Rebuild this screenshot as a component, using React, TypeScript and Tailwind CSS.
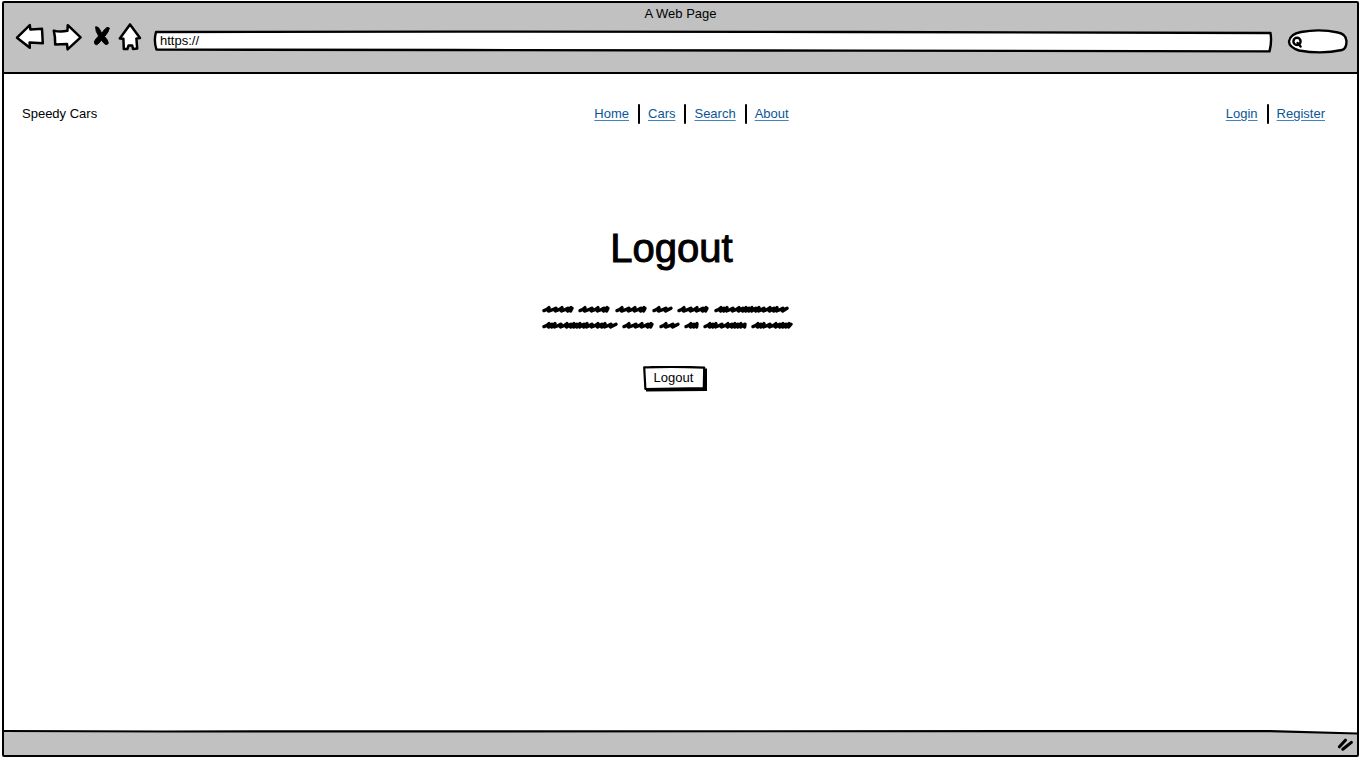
import type { ReactNode } from "react";

const mainLinks = ["Home", "Cars", "Search", "About"];
const accountLinks = ["Login", "Register"];

const scribbleLines = [
  { y: 5, words: [[0, 32], [36, 68], [73, 105], [110, 131], [135, 167], [172, 247]] },
  { y: 21, words: [[0, 76], [80, 112], [117, 138], [142, 157], [161, 205], [209, 251]] },
];

const shortPace = [7, 6, 6, 3, 3, 3, 3];
const longPace = [3, 3, 6, 6, 4, 3, 3, 3, 4, 3, 5, 6, 4, 3, 6, 6, 5, 6];

function scribble(start: number, end: number, y: number) {
  const pace = end - start > 35 || end - start < 20 ? longPace : shortPace;
  let x = start + 2;
  let i = 0;
  let d = `M${x} ${y + 1.6}`;
  while (x < end - 6) {
    const lift = i % 2 === 0 ? 1.4 : 0.8;
    d += `Q${x + 3} ${y + 0.6} ${x + 5} ${y - lift}Q${x + 3.4} ${y + 1.4} ${x + 4.6} ${y + 2}`;
    x += pace[i % pace.length];
    i += 1;
  }
  return `${d}L${end - 2} ${y - 0.8}`;
}

function Scribbles() {
  return (
    <svg className="h-7 w-[264px]" viewBox="0 0 264 28" fill="none" stroke="black" strokeWidth="3.4" strokeLinecap="round" strokeLinejoin="round" aria-hidden="true">
      {scribbleLines.map((line) =>
        line.words.map(([a, b]) => <path key={`${line.y}-${a}`} d={scribble(a, b, line.y)} />)
      )}
    </svg>
  );
}

function ToolButton({ label, children }: { label: string; children: ReactNode }) {
  return (
    <button type="button" aria-label={label} className="shrink-0">
      {children}
    </button>
  );
}

function LinkGroup({ label, items }: { label: string; items: string[] }) {
  return (
    <nav aria-label={label}>
      <ul className="flex h-5 items-center gap-[9px]">
        {items.map((item, i) => (
          <li key={item} className="flex items-center gap-2">
            {i > 0 && <span className="h-5 w-[2px] rounded-full bg-black" />}
            <a href="#" className="text-[#0b5596] underline decoration-[#3f86c0] underline-offset-2">
              {item}
            </a>
          </li>
        ))}
      </ul>
    </nav>
  );
}

function BrowserBar() {
  return (
    <header className="border-b-2 border-black bg-[#c1c1c1] pb-5">
      <p className="h-[21px] text-center leading-[21px]">A Web Page</p>
      <div className="flex items-end gap-1 pr-[9px] pl-3">
        <ToolButton label="Back">
          <svg className="h-7 w-8 overflow-visible" viewBox="16 24 32 28" fill="white" stroke="black" strokeWidth="2.5" strokeLinejoin="round">
            <path d="M17 37.7L29.8 25.2L30.4 29.6L42 28.8L42.8 43.2L29.6 42.6L29.8 47.8Z" />
          </svg>
        </ToolButton>
        <ToolButton label="Forward">
          <svg className="h-7 w-8 overflow-visible" viewBox="52 24 32 28" fill="white" stroke="black" strokeWidth="2.5" strokeLinejoin="round">
            <path d="M53.8 30.6Q60 32.4 67.4 30.8L67.8 25.2L80.6 37.4L67.6 49.4L67 44L55.2 44.4Q55.4 37 53.8 30.6Z" />
          </svg>
        </ToolButton>
        <ToolButton label="Stop">
          <svg className="h-7 w-6" viewBox="88 24 24 28" fill="black" stroke="black" strokeWidth="1" strokeLinejoin="round">
            <path d="M95.6 26.8Q98.4 26.6 99.4 29L101.8 33.4Q104 29.4 107 27.4L109.4 28Q109 31.4 104.6 36.6Q107.6 39.6 108.4 43Q107.6 45 105.4 44.4Q103 42.6 101.4 40Q99.4 43.4 96.6 44.8Q94.2 44.6 94.4 41.6Q95.6 38.8 98.6 36Q95.4 31.4 95.6 26.8Z" />
          </svg>
        </ToolButton>
        <ToolButton label="Home">
          <svg className="h-7 w-7 overflow-visible" viewBox="116 24 28 28" fill="white" stroke="black" strokeWidth="2.5" strokeLinejoin="round">
            <path d="M130 24.4L140 38L136.4 38.4L137.2 48.6L133 49L132.2 45.4L128.6 45.4L127.4 49L123.8 49L123.4 38.8L119.8 38.4Z" />
          </svg>
        </ToolButton>
        <div className="relative ml-[6px] h-[21px] grow">
          <svg className="absolute inset-0 h-full w-full overflow-visible" viewBox="0 0 1118 21" preserveAspectRatio="none" fill="white" stroke="black" strokeWidth="2.4" strokeLinejoin="round" aria-hidden="true">
            <path vectorEffect="non-scaling-stroke" d="M2 1L300 0.6L700 1L1116.5 2Q1118 11 1115.5 20.4L700 19.6L300 19L2.5 18.6Q-0.5 10 2 1Z" />
          </svg>
          <input type="text" aria-label="Address" defaultValue="https://" className="relative h-full w-full bg-transparent px-[6px] pb-[2px] outline-none" />
        </div>
        <div className="relative ml-3 h-[22px] w-15 shrink-0">
          <svg className="absolute inset-0 h-full w-full overflow-visible" viewBox="0 0 60 22" fill="none" stroke="black" strokeWidth="2.4" aria-hidden="true">
            <path fill="white" d="M13 2Q32 -1.5 50 2.5Q58 4 58.5 11Q58.5 19 54 20Q34 24.5 11 20.5Q1 17 1 11.5Q2 4 13 2Z" />
            <circle cx="9" cy="11.4" r="3.6" />
            <path d="M9.6 13L12.6 16.6" strokeLinecap="round" />
          </svg>
          <input type="text" aria-label="Search the web" className="relative h-full w-full bg-transparent pr-2 pl-4 outline-none" />
        </div>
      </div>
    </header>
  );
}

function StatusBar() {
  return (
    <footer className="relative flex h-6 items-center justify-end pr-1">
      <svg className="absolute inset-0 h-full w-full overflow-visible" viewBox="0 0 1353 24" preserveAspectRatio="none" aria-hidden="true">
        <path d="M0 0L1260 0L1353 2.5L1353 24L0 24Z" fill="#c1c1c1" />
        <path d="M0 0L160 0.5L1260 0L1353 2.5" fill="none" stroke="black" strokeWidth="2.2" vectorEffect="non-scaling-stroke" />
      </svg>
      <svg className="relative h-4 w-4" viewBox="0 0 16 16" fill="none" stroke="black" strokeWidth="3" strokeLinecap="round" aria-hidden="true">
        <path d="M2.4 11.8L8.4 5.2M5.8 14.2L14.4 7.4" />
      </svg>
    </footer>
  );
}

export default function App() {
  return (
    <div className="flex min-h-screen flex-col bg-white py-[1px] pr-[1px] pl-[2px] font-['Liberation_Sans',Arial,sans-serif] text-[13px] leading-5 text-black">
      <div className="flex grow flex-col rounded-[2px] border-2 border-black">
        <BrowserBar />
        <div className="flex grow flex-col pt-[30px] pr-8 pl-[18px]">
          <div className="grid grid-cols-[1fr_auto_1fr] items-center">
            <span>Speedy Cars</span>
            <div className="pl-9">
              <LinkGroup label="Main" items={mainLinks} />
            </div>
            <div className="justify-self-end">
              <LinkGroup label="Account" items={accountLinks} />
            </div>
          </div>
          <main className="flex flex-col items-center pt-25">
            <h1 className="pr-1 text-[40px] leading-12 [-webkit-text-stroke:1px_black]">Logout</h1>
            <div className="mt-8">
              <Scribbles />
            </div>
            <button type="button" className="relative mt-[34px] ml-[2px] h-[26px] w-16">
              <svg className="absolute inset-0 h-full w-full" viewBox="0 0 64 26" aria-hidden="true">
                <path d="M3 4L64 2.5L64 25L3 25.5Z" />
                <path d="M1.2 1.4Q30 0.2 61.2 1.6L60.8 22L2.4 23Z" fill="white" stroke="black" strokeWidth="2.2" strokeLinejoin="round" />
              </svg>
              <span className="relative block pr-[2px] pb-[2px]">Logout</span>
            </button>
          </main>
        </div>
        <StatusBar />
      </div>
    </div>
  );
}
